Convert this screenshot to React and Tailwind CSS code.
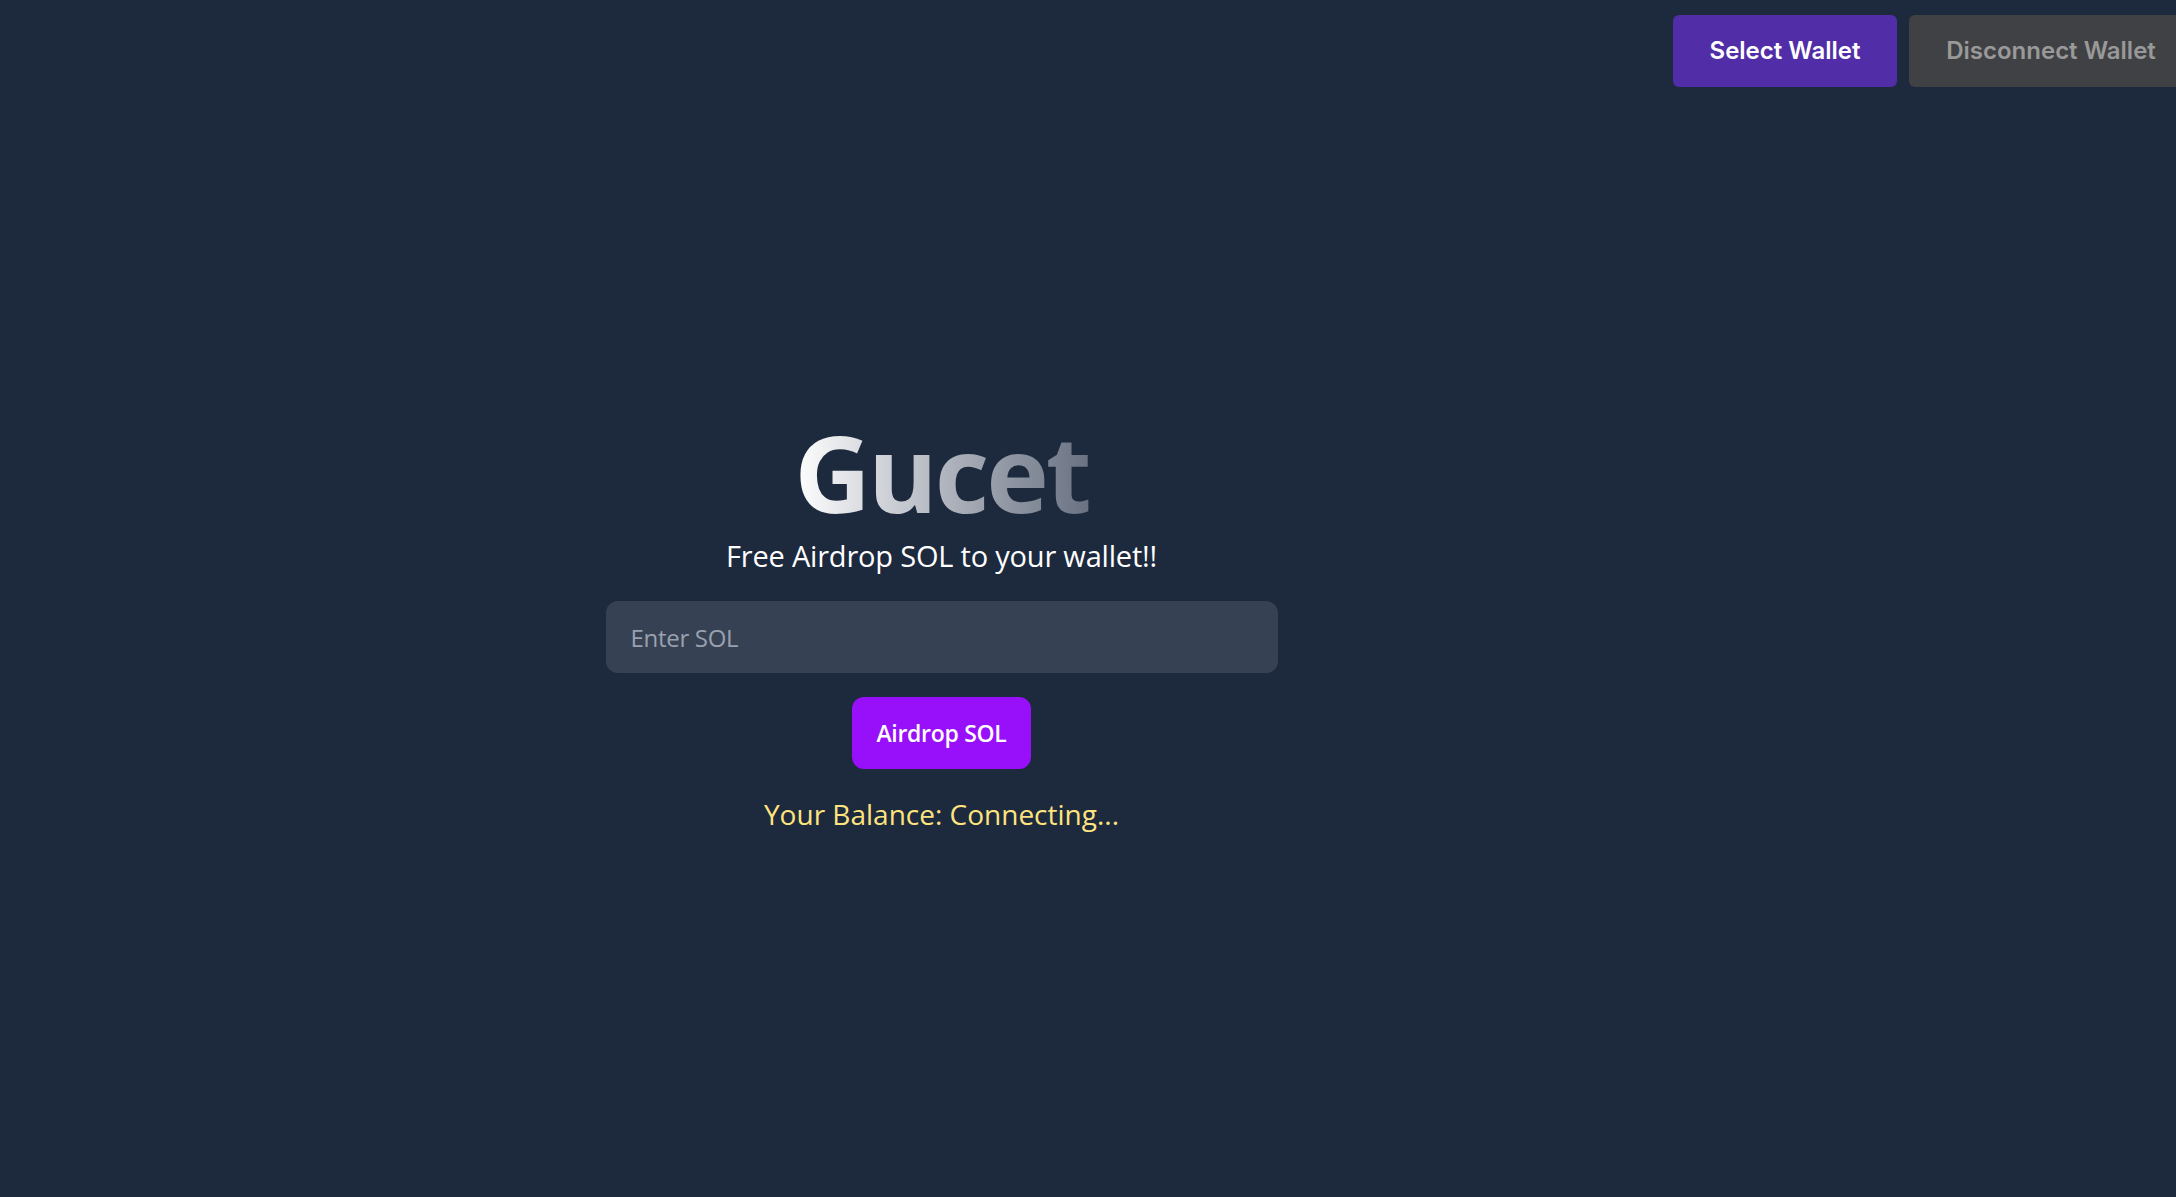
import React, { useState } from 'react';

export default function App() {
  const [amount, setAmount] = useState('');

  return (
    <div className="min-h-screen w-full overflow-hidden bg-[#1d293d] font-['Open_Sans',sans-serif] text-white">
      {/* wallet buttons */}
      <div className="flex justify-end gap-[12px] pt-[15px] mr-[-17px]">
        <button className="flex h-[72px] w-[224px] items-center justify-center rounded-[6px] bg-[#512da8] font-['Inter',sans-serif] text-[24px] font-semibold text-white">
          Select Wallet
        </button>
        <button className="flex h-[72px] w-[284px] items-center justify-center rounded-[6px] bg-[#404144] font-['Inter',sans-serif] text-[24px] font-semibold text-[#999999]">
          Disconnect Wallet
        </button>
      </div>

      <div className="mt-[332px] flex w-[1883px] flex-col items-center">
        <h1 className="bg-linear-to-r from-white to-gray-500 bg-clip-text text-[106px] font-bold leading-none tracking-[-3px] text-transparent">
          Gucet
        </h1>
        <p className="mt-[10px] text-[29px] leading-[42px] tracking-[-0.2px]">Free Airdrop SOL to your wallet!!</p>

        <input
          type="text"
          value={amount}
          onChange={(e) => setAmount(e.target.value)}
          placeholder="Enter SOL"
          className="mt-[24px] h-[72px] w-[672px] rounded-[12px] bg-gray-700 px-[25px] text-[24px] tracking-[-0.3px] text-white placeholder-gray-400 outline-none"
        />

        <button className="mt-[24px] h-[72px] rounded-[12px] bg-purple-600 px-[24px] text-[23px] font-semibold tracking-[-0.3px] text-white">
          Airdrop SOL
        </button>

        <p className="mt-[24px] text-[28px] leading-[42px] text-[#fde47f]">Your Balance: Connecting...</p>
      </div>
    </div>
  );
}
